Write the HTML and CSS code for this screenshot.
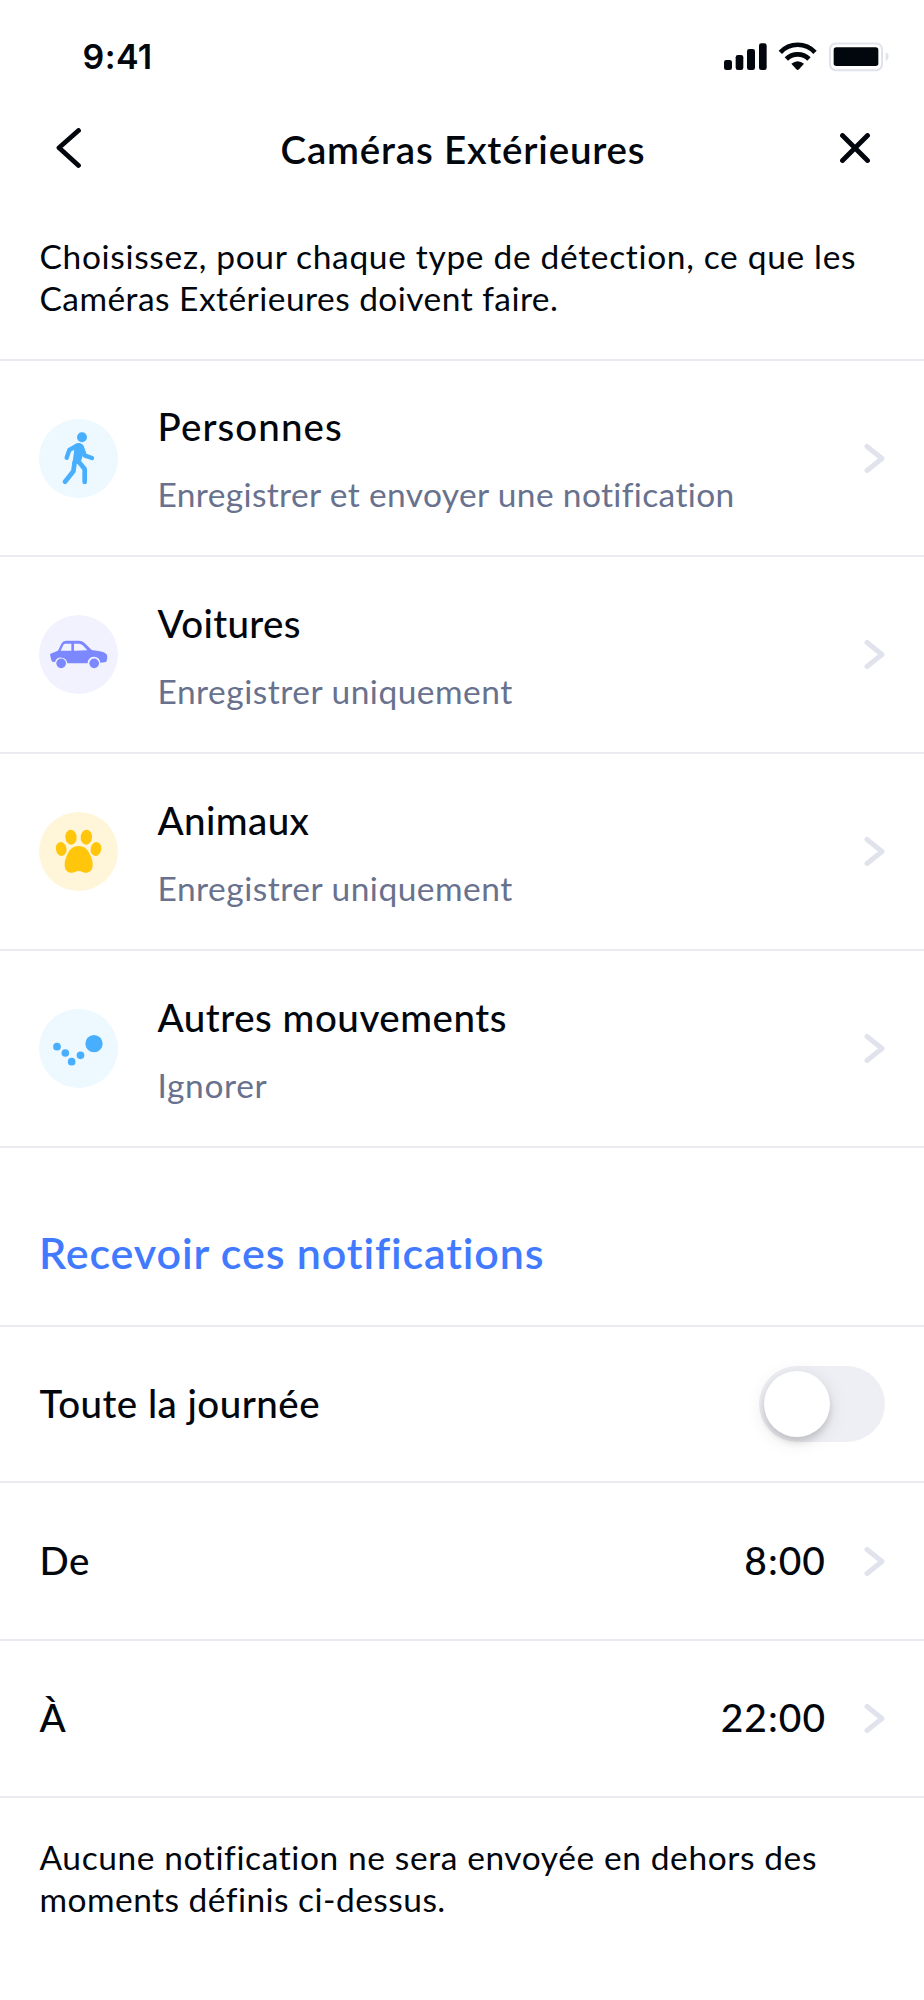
FILE: index.html
```html
<!DOCTYPE html>
<html lang="fr">
<head>
<meta charset="utf-8">
<title>Caméras Extérieures</title>
<link rel="stylesheet" href="styles.css">
</head>
<body>
<div class="status">
  <span class="clock">9:41</span>
  <svg class="indicators" viewBox="60 30 516 102" aria-hidden="true">
    <g fill="#02060d">
      <rect x="72" y="90" width="24" height="30" rx="7"/>
      <rect x="107" y="75" width="23" height="45" rx="7"/>
      <rect x="141" y="57" width="24" height="63" rx="7"/>
      <rect x="177" y="40" width="23" height="80" rx="7"/>
      <path d="M274 101Q293 86 312 101L297 118Q293 122 289 118Z"/>
      <rect x="401" y="52" width="134" height="56" rx="8"/>
    </g>
    <g fill="none" stroke="#02060d">
      <path d="M241 67A71 71 0 0 1 345 67" stroke-width="14"/>
      <path d="M259 87A48 48 0 0 1 327 87" stroke-width="14"/>
    </g>
    <rect x="390" y="40.500" width="156" height="80" rx="17" fill="none" stroke="#e1e3ec" stroke-width="6"/>
    <path d="M557 67Q566 71 566 80T557 94Z" fill="#e1e3ec"/>
  </svg>
</div>

<header class="header">
  <svg class="back" viewBox="0 0 25 40"><path d="M22.500 2.500 3 19.800 22.500 37.500"/></svg>
  <h1 class="title">Caméras Extérieures</h1>
  <svg class="close" viewBox="0 0 30 30"><path d="M2.500 2.500 27.500 27.500M27.500 2.500 2.500 27.500"/></svg>
</header>

<p class="note intro"><span class="note-line wide">Choisissez, pour chaque type de détection, ce que les</span> <span class="note-line tight">Caméras Extérieures doivent faire.</span></p>

<main>
  <section>
    <div class="row detection first">
      <svg class="icon" viewBox="28 56 237 237">
        <circle cx="146.500" cy="174.500" r="118.500" fill="#edf8ff"/>
        <circle cx="157" cy="111" r="15" fill="#48afff"/>
        <path d="M134 133Q146 124 158 132Q165 139 164 151L155 180L151 190L128 191L133 155Z" fill="#48afff"/>
        <g fill="none" stroke="#48afff" stroke-linecap="round" stroke-linejoin="round">
          <path d="M142 136 119 149 111 172" stroke-width="13"/>
          <path d="M156 140 166 166 187 173" stroke-width="13"/>
          <path d="M135 186 131 213 106 244" stroke-width="14"/>
          <path d="M147 184 165 206V245" stroke-width="14"/>
        </g>
      </svg>
      <div class="text"><h2 class="name personnes">Personnes</h2><p class="action notify">Enregistrer et envoyer une notification</p></div>
      <svg class="chevron" viewBox="0 0 21 31"><path d="M3 3.500 18 15.500 3 27.500"/></svg>
    </div>
    <div class="row detection">
      <svg class="icon" viewBox="28 47 237 237">
        <circle cx="146.500" cy="165.500" r="118.500" fill="#f2f2ff"/>
        <path fill="#7b88ff" fill-rule="evenodd" d="M61 166Q62 163 66 162L83 155Q87 153 90 144L96 132Q100 124 109 124H148Q157 124 164 130L186 152L211 156Q224 159 229 163Q233 166 233 173L231 185Q230 189 225 189L212 190A19 19 0 0 0 174 192H113A19 19 0 0 0 76 188H72Q66 188 65 183ZM107 133Q103 133 101 137L93 154H125V133ZM133 133V154L173 153L159 138Q154 133 148 133Z"/>
        <circle cx="94.500" cy="192" r="14.500" fill="#7b88ff"/>
        <circle cx="193.500" cy="192" r="14.500" fill="#7b88ff"/>
      </svg>
      <div class="text"><h2 class="name voitures">Voitures</h2><p class="action only">Enregistrer uniquement</p></div>
      <svg class="chevron" viewBox="0 0 21 31"><path d="M3 3.500 18 15.500 3 27.500"/></svg>
    </div>
    <div class="row detection">
      <svg class="icon" viewBox="28 39 237 237">
        <circle cx="146.500" cy="157.500" r="118.500" fill="#fff5d9"/>
        <g fill="#ffc60b">
          <ellipse cx="124" cy="114.500" rx="17" ry="22.500" transform="rotate(-5 124 114.500)"/>
          <ellipse cx="170" cy="114.500" rx="17" ry="22.500" transform="rotate(5 170 114.500)"/>
          <ellipse cx="94.500" cy="150" rx="16" ry="21" transform="rotate(-12 94.500 150)"/>
          <ellipse cx="199" cy="150" rx="16" ry="21" transform="rotate(12 199 150)"/>
          <path d="M147 141C166 141 175 153 182 169C187 180 189 186 189 197C189 213 180 221 168 221C159 221 155 216 147 216C139 216 135 221 126 221C114 221 105 213 105 197C105 186 107 180 112 169C119 153 128 141 147 141Z"/>
        </g>
      </svg>
      <div class="text"><h2 class="name animaux">Animaux</h2><p class="action only">Enregistrer uniquement</p></div>
      <svg class="chevron" viewBox="0 0 21 31"><path d="M3 3.500 18 15.500 3 27.500"/></svg>
    </div>
    <div class="row detection">
      <svg class="icon" viewBox="28 59 237 237">
        <circle cx="146.500" cy="177.500" r="118.500" fill="#edf8ff"/>
        <g fill="#48afff">
          <circle cx="82" cy="172" r="11.500"/><circle cx="107" cy="191" r="11.500"/><circle cx="126" cy="217" r="11.500"/><circle cx="152.500" cy="198" r="11.500"/><circle cx="193" cy="163" r="26"/>
        </g>
      </svg>
      <div class="text"><h2 class="name autres">Autres mouvements</h2><p class="action ignore">Ignorer</p></div>
      <svg class="chevron" viewBox="0 0 21 31"><path d="M3 3.500 18 15.500 3 27.500"/></svg>
    </div>
  </section>

  <h2 class="section-title">Recevoir ces notifications</h2>

  <section>
    <div class="row all-day">
      <span class="label">Toute la journée</span>
      <span class="switch" role="switch" aria-checked="false"><span class="knob"></span></span>
    </div>
    <div class="row time from">
      <span class="label de">De</span>
      <span class="value">8:00</span>
      <svg class="chevron" viewBox="0 0 21 31"><path d="M3 3.500 18 15.500 3 27.500"/></svg>
    </div>
    <div class="row time">
      <span class="label">À</span>
      <span class="value">22:00</span>
      <svg class="chevron" viewBox="0 0 21 31"><path d="M3 3.500 18 15.500 3 27.500"/></svg>
    </div>
  </section>
</main>

<p class="note outro"><span class="note-line">Aucune notification ne sera envoyée en dehors des</span> <span class="note-line tight">moments définis ci-dessus.</span></p>
</body>
</html>
```
FILE: styles.css
```css
* { box-sizing: border-box; margin: 0; padding: 0; }

body {
  width: 924px;
  min-height: 2000px;
  background: #fff;
  color: #02060d;
  font-family: Lato, "Open Sans", sans-serif;
  font-variant-ligatures: none;
}

svg { display: block; flex: none; }

.status {
  display: flex;
  justify-content: space-between;
  align-items: center;
  height: 113px;
  padding: 0 32px 0 82.5px;
}
.clock { font: 600 34px/42px Inter, sans-serif; letter-spacing: 0.4px; }
.indicators { width: 172px; height: 34px; }

.header {
  display: grid;
  grid-template-columns: 1fr auto 1fr;
  align-items: center;
  height: 70px;
  padding: 0 54px 0 56px;
}
.title { padding-top: 1px; font-size: 38.5px; line-height: 46px; font-weight: 600; letter-spacing: 0.8px; }
.back, .close { fill: none; stroke: #02060d; stroke-width: 4.800; stroke-linecap: round; stroke-linejoin: round; }
.back { width: 25px; height: 40px; }
.close { width: 30px; height: 30px; justify-self: end; }

.note { font-size: 33.5px; line-height: 42px; letter-spacing: 0.6px; }
.note-line { display: block; white-space: nowrap; }
.wide { letter-spacing: 0.67px; }
.tight { letter-spacing: 0.46px; }
.intro { padding: 52px 39.500px 40px; border-bottom: 2px solid #e9ebf1; }
.outro { padding: 38px 39.500px; }

.row {
  display: flex;
  align-items: center;
  height: 157px;
  padding: 0 39px 0 39.5px;
  border-bottom: 2px solid #e9ebf1;
}
.detection { height: 197px; padding-left: 39px; gap: 39.5px; }
.first { height: 196px; }
.all-day { height: 156px; }
.from { height: 158px; }

.icon { width: 79px; height: 79px; }
.text { display: flex; flex: 1; flex-direction: column; gap: 24px; padding-top: 2px; }
.name { font-size: 38.5px; line-height: 46px; font-weight: 500; }
.personnes { letter-spacing: 1.1px; }
.voitures { letter-spacing: 0.35px; }
.animaux { letter-spacing: 0.4px; }
.autres { letter-spacing: 0.52px; }
.action { font-size: 33.5px; line-height: 42px; color: #68718d; }
.notify { letter-spacing: 0.36px; }
.only { letter-spacing: 0.5px; }
.ignore { letter-spacing: 0.65px; }

.chevron { width: 21px; height: 31px; fill: none; stroke: #e1e3ec; stroke-width: 5; stroke-linecap: round; stroke-linejoin: round; }

.section-title {
  height: 179px;
  padding: 79px 39px 0;
  border-bottom: 2px solid #e9ebf1;
  color: #417aff;
  font-size: 43px;
  line-height: 52px;
  font-weight: 600;
  letter-spacing: 0.87px;
}

.label { flex: 1; padding-bottom: 3px; font-size: 38.5px; line-height: 46px; font-weight: 500; letter-spacing: 0.48px; }
.de { letter-spacing: 0.5px; }
.value { margin-right: 38px; padding-bottom: 3px; font-size: 39px; line-height: 46px; font-weight: 500; letter-spacing: 1px; }

.switch { display: flex; width: 126px; height: 76px; padding: 5px; border-radius: 38px; background: #eeeff4; }
.knob { width: 66px; height: 66px; border-radius: 50%; background: #fff; box-shadow: 0 5px 6px rgba(0, 0, 0, 0.13), 0 4px 20px rgba(0, 0, 0, 0.1); }
```
